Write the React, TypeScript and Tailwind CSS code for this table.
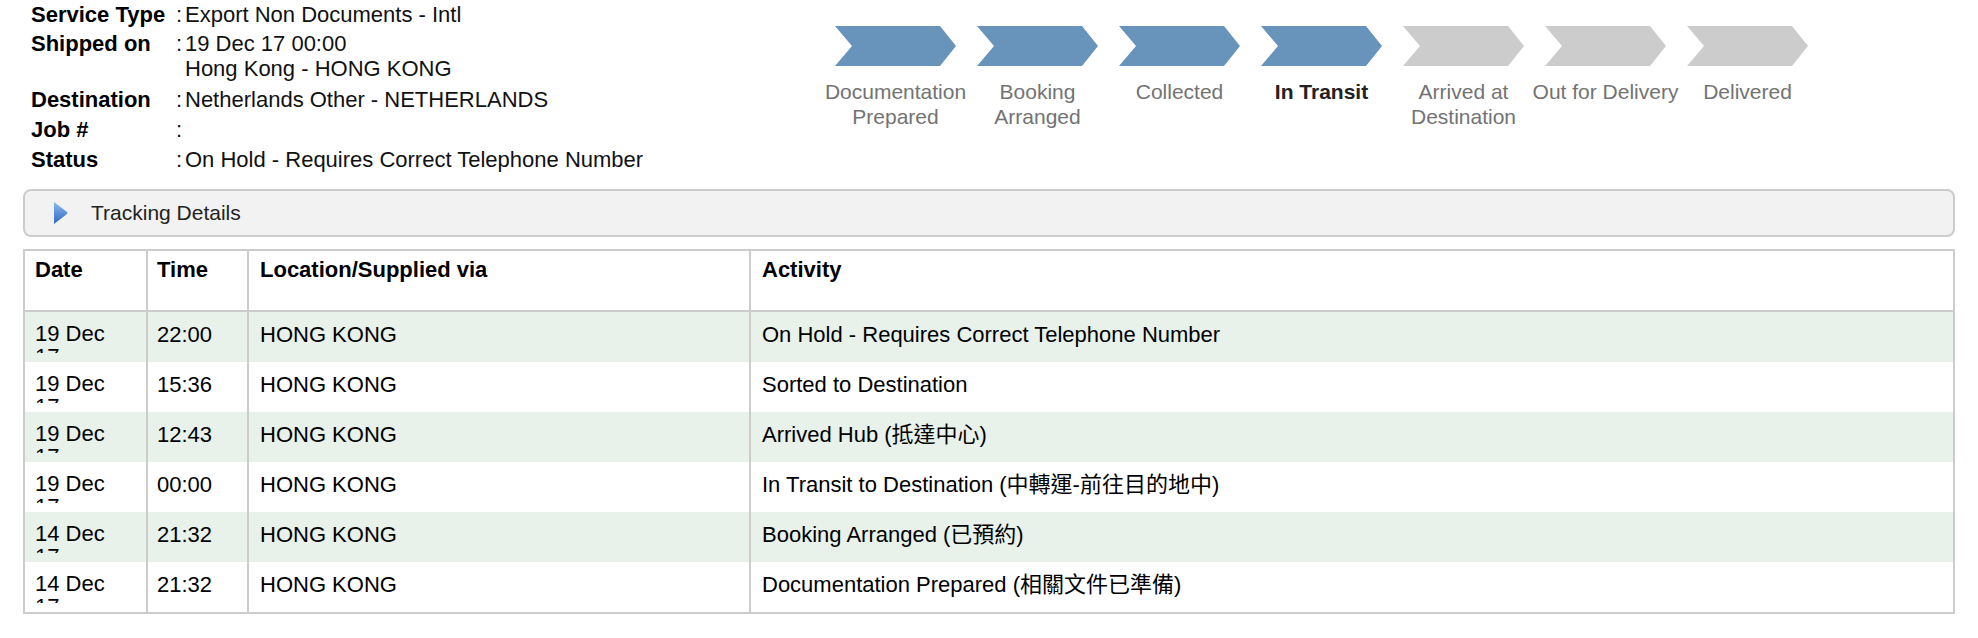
import React from "react";

const font = { fontFamily: '"Liberation Sans", "Noto Sans CJK TC", Arial, sans-serif' };

const steps: { label: React.ReactNode; active: boolean; bold?: boolean }[] = [
  { label: <>Documentation<br />Prepared</>, active: true },
  { label: <>Booking<br />Arranged</>, active: true },
  { label: <>Collected</>, active: true },
  { label: <>In Transit</>, active: true, bold: true },
  { label: <>Arrived at<br />Destination</>, active: false },
  { label: <>Out for Delivery</>, active: false },
  { label: <>Delivered</>, active: false },
];

const rows = [
  ["19 Dec 17", "22:00", "HONG KONG", "On Hold - Requires Correct Telephone Number"],
  ["19 Dec 17", "15:36", "HONG KONG", "Sorted to Destination"],
  ["19 Dec 17", "12:43", "HONG KONG", "Arrived Hub (抵達中心)"],
  ["19 Dec 17", "00:00", "HONG KONG", "In Transit to Destination (中轉運-前往目的地中)"],
  ["14 Dec 17", "21:32", "HONG KONG", "Booking Arranged (已預約)"],
  ["14 Dec 17", "21:32", "HONG KONG", "Documentation Prepared (相關文件已準備)"],
];

function Chevron({ color }: { color: string }) {
  return (
    <svg width="121" height="40" viewBox="0 0 121 40">
      <polygon points="0,0 105,0 121,20 105,40 0,40 17,20" fill={color} />
    </svg>
  );
}

function InfoRow({ label, children, h }: { label: string; children: React.ReactNode; h: string }) {
  return (
    <div className={`flex ${h}`}>
      <div className="w-[145px] font-bold text-black leading-[25px] pt-[2px]">{label}</div>
      <div className="w-[9px] leading-[25px] pt-[2px]">:</div>
      <div className="leading-[25px] pt-[2px] text-[#111]">{children}</div>
    </div>
  );
}

export default function App() {
  return (
    <div className="bg-white w-[1978px] h-[638px] overflow-hidden text-[22px] text-[#111]" style={font}>
      <div className="flex">
        <div className="w-[835px] pl-[31px] flex flex-col">
          <InfoRow label="Service Type" h="h-[29px]">Export Non Documents - Intl</InfoRow>
          <InfoRow label="Shipped on" h="h-[56px]">
            19 Dec 17 00:00
            <br />
            Hong Kong - HONG KONG
          </InfoRow>
          <InfoRow label="Destination" h="h-[30px]">Netherlands Other - NETHERLANDS</InfoRow>
          <InfoRow label="Job #" h="h-[30px]">{""}</InfoRow>
          <InfoRow label="Status" h="h-[30px]">On Hold - Requires Correct Telephone Number</InfoRow>
        </div>
        <div className="flex gap-[21px] pt-[26px]">
          {steps.map((s, i) => (
            <div key={i} className="w-[121px] flex flex-col items-center">
              <Chevron color={s.active ? "#6894bb" : "#cccccc"} />
              <div
                className={`mt-[13px] text-[21px] leading-[25px] text-center whitespace-nowrap ${
                  s.bold ? "font-bold text-[#222]" : "text-[#737373]"
                }`}
              >
                {s.label}
              </div>
            </div>
          ))}
        </div>
      </div>

      <div className="ml-[23px] w-[1932px] mt-[14px] h-[48px] rounded-[8px] border-2 border-[#cccccc] bg-[#f2f2f2] flex items-center">
        <svg width="15" height="24" viewBox="0 0 15 24" className="ml-[28px]">
          <defs>
            <linearGradient id="tri" x1="0" y1="0" x2="0" y2="1">
              <stop offset="0" stopColor="#8db8ee" />
              <stop offset="1" stopColor="#2f69c2" />
            </linearGradient>
          </defs>
          <path d="M1 1 L14 11 Q15 12 14 13 L1 23 Z" fill="url(#tri)" />
        </svg>
        <span className="ml-[23px] text-[21px] text-[#222]">Tracking Details</span>
      </div>

      <div className="ml-[23px] w-[1932px] mt-[12px] border-2 border-[#cccccc]">
        <div className="flex h-[61px] border-b-2 border-[#cccccc] font-bold text-black">
          <div className="w-[121px] pl-[10px] pt-[7px] leading-[24px]">Date</div>
          <div className="w-[101px] border-l-2 border-[#cccccc] pl-[9px] pt-[7px] leading-[24px]">Time</div>
          <div className="w-[502px] border-l-2 border-[#cccccc] pl-[11px] pt-[7px] leading-[24px]">
            Location/Supplied via
          </div>
          <div className="flex-1 border-l-2 border-[#cccccc] pl-[11px] pt-[7px] leading-[24px]">Activity</div>
        </div>
        {rows.map((r, i) => (
          <div key={i} className={`flex h-[50px] ${i % 2 === 0 ? "bg-[#e8f1ea]" : "bg-white"} text-black`}>
            <div className="w-[121px] pl-[10px] pt-[10px]">
              <div className="h-[31px] overflow-hidden leading-[23px] w-[90px]">{r[0]}</div>
            </div>
            <div className="w-[101px] border-l-2 border-[#cccccc] pl-[9px] pt-[11px] leading-[24px]">{r[1]}</div>
            <div className="w-[502px] border-l-2 border-[#cccccc] pl-[11px] pt-[11px] leading-[24px]">{r[2]}</div>
            <div className="flex-1 border-l-2 border-[#cccccc] pl-[11px] pt-[11px] leading-[24px]">{r[3]}</div>
          </div>
        ))}
      </div>
    </div>
  );
}
